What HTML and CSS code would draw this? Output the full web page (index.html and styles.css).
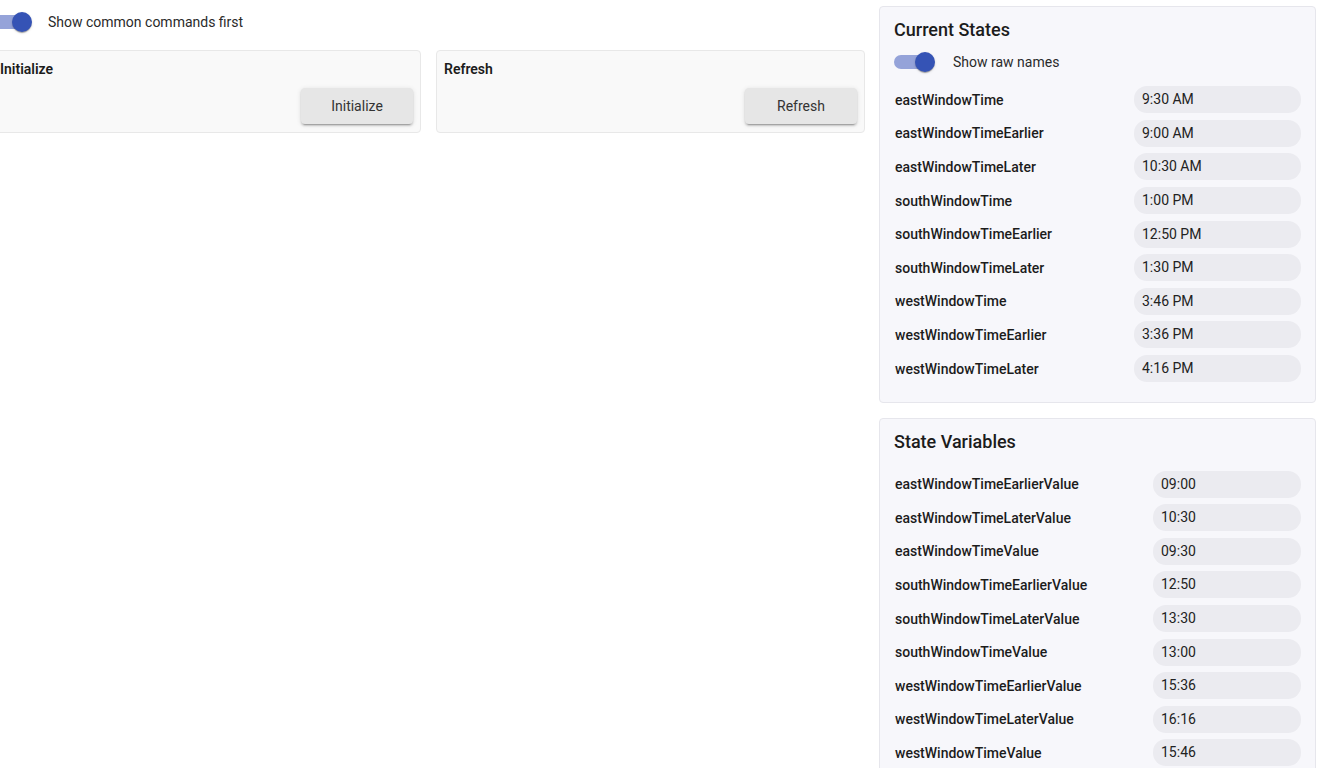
FILE: index.html
```html
<!DOCTYPE html>
<html lang="en">
<head>
  <meta charset="UTF-8">
  <title>Device Commands</title>
  <link rel="stylesheet" href="styles.css">
</head>
<body>

  <div class="page">
    <!-- Commands column -->
    <div class="commands">
      <div class="toggle-row first-toggle">
        <span class="switch"><span class="track"></span><span class="thumb"></span></span>
        <span class="toggle-label">Show common commands first</span>
      </div>

      <div class="command-grid">
        <div class="command-card">
          <div class="command-title">Initialize</div>
          <div class="command-actions">
            <button class="command-btn">Initialize</button>
          </div>
        </div>
        <div class="command-card">
          <div class="command-title">Refresh</div>
          <div class="command-actions">
            <button class="command-btn">Refresh</button>
          </div>
        </div>
      </div>
    </div>

    <!-- Side panels -->
    <div class="sidebar">
      <div class="panel">
        <h3 class="panel-title">Current States</h3>
        <div class="toggle-row panel-toggle">
          <span class="switch"><span class="track"></span><span class="thumb"></span></span>
          <span class="toggle-label">Show raw names</span>
        </div>
        <div class="attr-list states">
          <div class="attr-name">eastWindowTime</div><div class="attr-value">9:30 AM</div>
          <div class="attr-name">eastWindowTimeEarlier</div><div class="attr-value">9:00 AM</div>
          <div class="attr-name">eastWindowTimeLater</div><div class="attr-value">10:30 AM</div>
          <div class="attr-name">southWindowTime</div><div class="attr-value">1:00 PM</div>
          <div class="attr-name">southWindowTimeEarlier</div><div class="attr-value">12:50 PM</div>
          <div class="attr-name">southWindowTimeLater</div><div class="attr-value">1:30 PM</div>
          <div class="attr-name">westWindowTime</div><div class="attr-value">3:46 PM</div>
          <div class="attr-name">westWindowTimeEarlier</div><div class="attr-value">3:36 PM</div>
          <div class="attr-name">westWindowTimeLater</div><div class="attr-value">4:16 PM</div>
        </div>
      </div>

      <div class="panel">
        <h3 class="panel-title">State Variables</h3>
        <div class="attr-list variables">
          <div class="attr-name">eastWindowTimeEarlierValue</div><div class="attr-value">09:00</div>
          <div class="attr-name">eastWindowTimeLaterValue</div><div class="attr-value">10:30</div>
          <div class="attr-name">eastWindowTimeValue</div><div class="attr-value">09:30</div>
          <div class="attr-name">southWindowTimeEarlierValue</div><div class="attr-value">12:50</div>
          <div class="attr-name">southWindowTimeLaterValue</div><div class="attr-value">13:30</div>
          <div class="attr-name">southWindowTimeValue</div><div class="attr-value">13:00</div>
          <div class="attr-name">westWindowTimeEarlierValue</div><div class="attr-value">15:36</div>
          <div class="attr-name">westWindowTimeLaterValue</div><div class="attr-value">16:16</div>
          <div class="attr-name">westWindowTimeValue</div><div class="attr-value">15:46</div>
        </div>
      </div>
    </div>
  </div>

</body>
</html>
```

FILE: styles.css
```css
/* Basic styling */
body, html {
  margin: 0;
  padding: 0;
  font-family: Roboto, "Liberation Sans", sans-serif;
  background-color: #fff;
  color: #222;
  overflow: hidden;
}

/* Main layout */
.page {
  display: flex;
  gap: 14px;
  margin-left: -8px;
  padding: 6px 13px 0 0;
}
.commands {
  flex: 1;
  min-width: 0;
}
.sidebar {
  width: 437px;
  flex-shrink: 0;
  display: flex;
  flex-direction: column;
  gap: 15px;
}

/* Switch */
.toggle-row {
  display: flex;
  align-items: center;
  gap: 16px;
  height: 20px;
}
.first-toggle {
  margin: 6px 0 0 -1px;
}
.switch {
  position: relative;
  width: 41px;
  height: 20px;
  flex-shrink: 0;
}
.track {
  position: absolute;
  left: 0;
  top: 3px;
  width: 36px;
  height: 14px;
  border-radius: 7px;
  background-color: #95a3d9;
}
.thumb {
  position: absolute;
  left: 21px;
  top: 0;
  width: 20px;
  height: 20px;
  border-radius: 50%;
  background-color: #3553b5;
  box-shadow: 0 2px 1px -1px rgba(0, 0, 0, 0.2), 0 1px 1px rgba(0, 0, 0, 0.14), 0 1px 3px rgba(0, 0, 0, 0.12);
}
.toggle-label {
  font-size: 14px;
  color: #2a2a2a;
}

/* Command cards */
.command-grid {
  display: grid;
  grid-template-columns: 1fr 1fr;
  gap: 15px;
  margin-top: 18px;
}
.command-card {
  background-color: #f9f9f9;
  border: 1px solid #e8e8e8;
  border-radius: 4px;
  padding: 10px 7px 8px 7px;
}
.command-title {
  font-size: 14px;
  font-weight: 600;
  line-height: 16px;
  color: #1c1c1c;
}
.command-actions {
  display: flex;
  justify-content: flex-end;
  margin-top: 11px;
}
.command-btn {
  width: 112px;
  height: 36px;
  border: none;
  border-radius: 4px;
  background-color: #e6e6e6;
  color: #333;
  font-family: inherit;
  font-size: 14px;
  cursor: pointer;
  box-shadow: 0 3px 1px -2px rgba(0, 0, 0, 0.2), 0 2px 2px rgba(0, 0, 0, 0.14), 0 1px 5px rgba(0, 0, 0, 0.12);
}

/* Side panels */
.panel {
  background-color: #f7f7fb;
  border: 1px solid #e6e6ec;
  border-radius: 4px;
  padding: 11px 14px 17px 14px;
}
.panel-title {
  margin: 0;
  font-size: 18px;
  font-weight: 500;
  line-height: 24px;
  color: #1c1c1c;
}
.panel-toggle {
  margin-top: 10px;
  gap: 18px;
}
.attr-list {
  display: grid;
  grid-auto-rows: 33.6px;
  align-items: center;
  margin-top: 11px;
}
.attr-list.states {
  grid-template-columns: 240px 1fr;
}
.attr-list.variables {
  grid-template-columns: 259px 1fr;
  margin-top: 13px;
}
.attr-name {
  font-size: 14px;
  font-weight: 500;
  color: #1c1c1c;
  padding-left: 1px;
}
.attr-value {
  height: 27px;
  line-height: 27px;
  border-radius: 13px;
  background-color: #ebebf0;
  padding: 0 8px;
  font-size: 14px;
  color: #222;
}
```
